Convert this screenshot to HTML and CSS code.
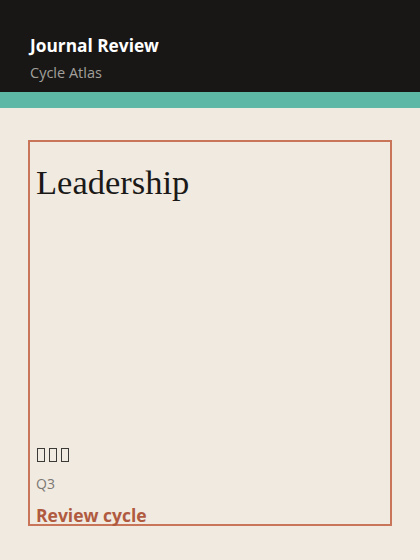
FILE: index.html
```html
<!DOCTYPE html>
<html lang="en">
<head>
    <meta charset="UTF-8">
    <meta name="viewport" content="width=device-width, initial-scale=1.0">
    <title>Journal Review</title>
    <link rel="stylesheet" href="styles.css">
</head>
<body>
    <header class="top-bar">
        <h1 class="app-title">Journal Review</h1>
        <p class="app-subtitle">Cycle Atlas</p>
    </header>
    <div class="accent-strip"></div>

    <main class="content">
        <section class="review-card">
            <h2 class="card-title">Leadership</h2>
            <div class="card-foot">
                <!-- rating glyphs, shown as empty boxes -->
                <div class="card-icons">
                    <span class="glyph-box"></span>
                    <span class="glyph-box"></span>
                    <span class="glyph-box"></span>
                </div>
                <div class="card-period">Q3</div>
                <div class="card-label">Review cycle</div>
            </div>
        </section>
    </main>
</body>
</html>
```

FILE: styles.css
```css
* {
    margin: 0;
    padding: 0;
    box-sizing: border-box;
}

body {
    font-family: 'Open Sans', 'Noto Sans', sans-serif;
    background: #f1eae0;
    color: #1a1918;
    min-height: 100vh;
}

.top-bar {
    background: #181716;
    height: 92px;
    padding: 34px 30px 0;
}

.app-title {
    color: #ffffff;
    font-size: 17.3px;
    font-weight: 700;
    line-height: 24px;
}

.app-subtitle {
    color: #a3a09b;
    font-size: 14.5px;
    line-height: 20px;
    margin-top: 5px;
}

.accent-strip {
    background: #5db8a6;
    height: 16px;
}

.content {
    padding: 32px 28px 34px;
}

.review-card {
    border: 2px solid #c8755a;
    height: 386px;
    padding: 22px 6px 0;
    display: flex;
    flex-direction: column;
    justify-content: space-between;
}

.card-title {
    font-family: 'Liberation Serif', 'Times New Roman', serif;
    font-weight: 400;
    font-size: 34.5px;
    line-height: 36px;
}

.card-foot {
    display: flex;
    flex-direction: column;
}

.card-icons {
    display: flex;
    gap: 4px;
    height: 20px;
    align-items: center;
    padding-left: 1px;
}

.glyph-box {
    width: 8px;
    height: 14px;
    border: 1.5px solid #3c3a36;
}

.card-period {
    color: #7b7873;
    font-size: 14px;
    line-height: 20px;
    margin-top: 9px;
}

.card-label {
    color: #b05a40;
    font-size: 17.5px;
    font-weight: 700;
    line-height: 18px;
    margin-top: 12px;
}
```
